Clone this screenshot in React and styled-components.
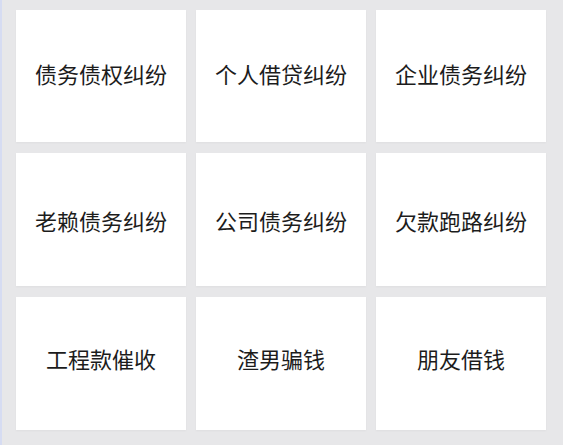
import React from "react";
import styled, { createGlobalStyle } from "styled-components";

const Global = createGlobalStyle`
  html, body { margin: 0; padding: 0; background: #e7e7e9; }
  body { font-family: "Noto Sans CJK SC", "Noto Sans", sans-serif; }
`;

const Page = styled.div`
  width: 563px;
  height: 445px;
  box-sizing: border-box;
  background: #e7e7e9;
  border-left: 2px solid #d6dcf2;
  padding: 10px 0 0 14px;
  overflow: hidden;
`;

const Grid = styled.div`
  display: grid;
  grid-template-columns: repeat(3, 170px);
  grid-template-rows: 132px 133px 133px;
  column-gap: 10px;
  row-gap: 11px;
`;

const Card = styled.div`
  background: #ffffff;
  display: flex;
  align-items: center;
  justify-content: center;
  padding-bottom: ${(p) => p.$lift}px;
  box-sizing: border-box;
  box-shadow: 0 1px 2px rgba(0, 0, 0, 0.04);
`;

const Label = styled.span`
  font-size: 22px;
  color: #1c1c1c;
  letter-spacing: 0;
  line-height: 1;
`;

const items = [
  "债务债权纠纷",
  "个人借贷纠纷",
  "企业债务纠纷",
  "老赖债务纠纷",
  "公司债务纠纷",
  "欠款跑路纠纷",
  "工程款催收",
  "渣男骗钱",
  "朋友借钱",
];

export default function App() {
  return (
    <>
      <Global />
      <Page>
        <Grid>
          {items.map((t, i) => (
            <Card key={t} $lift={i < 3 ? 6 : i < 6 ? 0 : 12}>
              <Label>{t}</Label>
            </Card>
          ))}
        </Grid>
      </Page>
    </>
  );
}
